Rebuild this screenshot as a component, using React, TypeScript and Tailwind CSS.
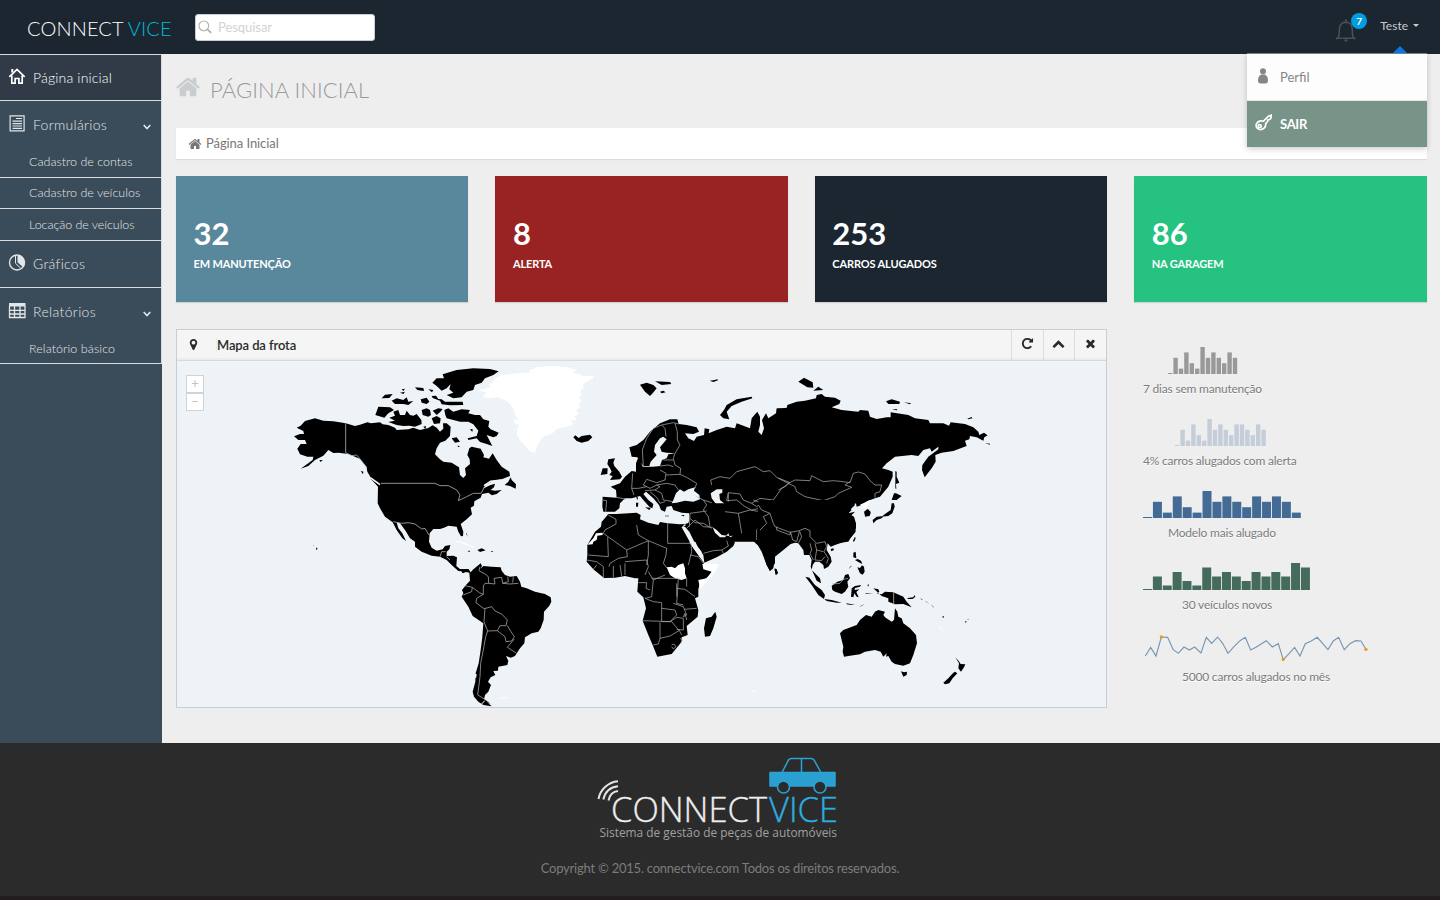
import React from "react";

const HOME =
  "M1472 992v480q0 26-19 45t-45 19h-384v-384h-256v384h-384q-26 0-45-19t-19-45v-480q0-1 .5-3t.5-3l575-474 575 474q1 2 1 6zm223-69l-62 74q-8 9-21 11h-3q-13 0-21-7l-692-577-692 577q-12 8-24 7-13-2-21-11l-62-74q-8-10-7-23.5t11-21.5l719-599q32-26 76-26t76 26l244 204v-195q0-14 9-23t23-9h192q14 0 23 9t9 23v408l219 182q10 8 11 21.5t-7 23.5z";
const MARKER =
  "M1152 640q0-106-75-181t-181-75-181 75-75 181 75 181 181 75 181-75 75-181zm256 0q0 109-33 179l-364 774q-16 33-47.5 52t-67.5 19-67.5-19-46.5-52l-365-774q-33-70-33-179 0-212 150-362t362-150 362 150 150 362z";
const REPEAT =
  "M1664 256v448q0 26-19 45t-45 19h-448q-42 0-59-40-17-39 14-69l138-138q-148-137-349-137-104 0-198.5 40.5t-163.5 109.5-109.5 163.5-40.5 198.5 40.5 198.5 109.5 163.5 163.5 109.5 198.5 40.5q119 0 225-52t179-147q7-10 23-12 15 0 25 9l137 138q9 8 9.5 20.5t-7.5 22.5q-109 132-264 204.5t-327 72.5q-156 0-298-61t-245-164-164-245-61-298 61-298 164-245 245-164 298-61q147 0 284.5 55.5t244.5 156.5l130-129q29-31 70-14 39 17 39 59z";
const CHEVRON =
  "M1683 1331l-166 165q-19 19-45 19t-45-19l-531-531-531 531q-19 19-45 19t-45-19l-166-165q-19-19-19-45.5t19-45.5l742-741q19-19 45-19t45 19l742 741q19 19 19 45.5t-19 45.5z";
const TIMES =
  "M1490 1322q0 40-28 68l-136 136q-28 28-68 28t-68-28l-294-294-294 294q-28 28-68 28t-68-28l-136-136q-28-28-28-68t28-68l294-294-294-294q-28-28-28-68t28-68l136-136q28-28 68-28t68 28l294 294 294-294q28-28 68-28t68 28l136 136q28 28 28 68t-28 68l-294 294 294 294q28 28 28 68z";

function Fa({ d, className }: { d: string; className: string }) {
  return (
    <svg viewBox="0 0 1792 1792" fill="currentColor" className={className}>
      <path d={d} />
    </svg>
  );
}

function Header() {
  return (
    <header className="relative flex h-[54px] shrink-0 items-start bg-[#1b2631]">
      <div className="ml-[27px] mt-[13px] w-[168px] whitespace-nowrap text-[20px] font-light leading-[30px] tracking-[0.15px] text-white">
        CONNECT <span className="-ml-[1px] text-[#00bdd6]">VICE</span>
      </div>
      <div className="mt-[14px] flex h-[27px] w-[180px] items-center rounded-[3px] border border-[#c8ccd4] bg-white pl-[2px]">
        <svg viewBox="0 0 16 16" className="-mt-[1px] h-[15px] w-[15px] shrink-0" fill="none" stroke="#b0b0b0" strokeWidth="1.2">
          <circle cx="6.2" cy="6.2" r="5.2" />
          <path d="M10.3 10.2 L14 13.800" strokeWidth="2" />
        </svg>
        <input placeholder="Pesquisar" className="ml-[5px] w-[140px] bg-transparent text-[13px] tracking-[-0.05px] text-gray-600 outline-none placeholder:text-[#d3d3d3]" />
      </div>
      <div className="relative ml-auto mt-[19px] h-[24px] w-[25px]">
        <svg viewBox="0 0 22 24" className="h-[24px] w-[22px]" fill="none" stroke="#4b5157" strokeWidth="1.5">
          <path d="M1.300 20q2.700-1.500 2.900-5C4.200 8 4.500 3.500 10.800 3.200 17.200 3.500 17.400 8 17.400 15q.2 3.500 2.900 5M1 19.300h6.500M14 19.300h6.500M8 19.300h6" />
          <path d="M9.800 1.500h2M9.500 21.500h2.800" strokeWidth="2.200" />
        </svg>
        <span className="absolute -top-[6px] left-[16px] flex h-4 w-4 items-center justify-center rounded-full bg-[#009edf] text-[10px] font-bold text-white">7</span>
      </div>
      <div className="ml-[20px] mr-[21px] mt-[18px] flex items-center text-[12px] leading-[16px] text-[#c8cbce]">
        Teste
        <span className="-mt-[1px] ml-[5px] h-0 w-0 border-x-[3px] border-t-[3px] border-x-transparent border-t-[#c8cbce]" />
      </div>
      <span className="absolute right-[33px] top-[46px] h-0 w-0 border-x-[7px] border-b-[7px] border-x-transparent border-b-[#0a77e8]" />
      <div className="absolute right-[13px] top-[53px] z-10 w-[180px] border-t border-[#6f8a80] bg-[#fdfdfd] text-[13px] shadow-[0_2px_6px_rgba(0,0,0,0.2)]">
        <a className="flex h-[47px] items-center border-b border-[#e6e6e6] text-[#868686]">
          <svg viewBox="0 0 12 16" className="-mt-[3px] ml-[10px] h-[16px] w-[12px]" fill="#868686">
            <circle cx="6" cy="3.200" r="3" />
            <path d="M3.800 6.500h4.400q2.800 2 2.800 5.500c0 3-1 3.500-5 3.500s-5-.5-5-3.500q0-3.500 2.800-5.500z" />
          </svg>
          <span className="ml-[11px] mt-[2px]">Perfil</span>
        </a>
        <a className="flex h-[46px] items-center bg-[#789388] font-bold text-white">
          <svg viewBox="0 0 18 17" className="-mt-[4px] ml-[8px] h-[17px] w-[18px]" fill="none" stroke="white" strokeWidth="1.700">
            <path d="M8.500 7.200 13.500 2.200 16.200 1.200 16 4 14.500 5.500 13 5.800 12.600 7.500 10.700 9.500C11.200 13.500 8 16 4.500 15.500 1.500 14.500.5 12 1.500 10 2.800 7 6 6.500 8.500 7.200z" />
            <circle cx="4.700" cy="12.200" r="1.500" />
          </svg>
          <span className="ml-[7px] mt-[1px] tracking-[-0.3px]">SAIR</span>
        </a>
      </div>
    </header>
  );
}

const icons: Record<string, React.ReactNode> = {
  home: (
    <g fill="none" stroke="currentColor" strokeWidth="1.700">
      <path d="M.8 8.800 8.500 1.500l7.700 7.300M3.300 7.500v7.600h3.300v-4.600h3.800v4.600h3.300V7.500" />
      <path d="M3.800 4.500V1" strokeWidth="2" />
    </g>
  ),
  form: (
    <g fill="none" stroke="currentColor" strokeWidth="1.200">
      <path d="M1.600 .8h14v15h-14z" />
      <path d="M7.500 3.500h6M4 6.200h9.500M4 8.600h9.500M4 11h9.500M4 13.400h9.500" />
    </g>
  ),
  pie: (
    <g>
      <circle cx="8.500" cy="8.500" r="7.500" fill="none" stroke="currentColor" strokeWidth="1.400" />
      <path d="M9 1a7.500 7.500 0 0 1 5.600 12.300L9 8.200z" fill="currentColor" />
      <path d="M7 1.500v7.800l5 4.700" stroke="currentColor" fill="none" />
    </g>
  ),
  table: (
    <g>
      <path d="M.5 1h16.500v3.500H.5z" fill="currentColor" />
      <path d="M1 4v11.500h15.500V4M1 8.300h15.500M1 12h15.500M6 4v11.500M11.500 4v11.500" stroke="currentColor" strokeWidth="1.300" fill="none" />
    </g>
  ),
};

function Item({ icon, label, arrow, className }: { icon: string; label: string; arrow?: boolean; className: string }) {
  return (
    <a className={"flex items-center pl-[8px] pr-[10px] text-[14px] " + className}>
      <svg viewBox="0 0 17 17" className="-mt-[2px] h-[17px] w-[18px]">{icons[icon]}</svg>
      <span className="ml-[7px]">{label}</span>
      {arrow && (
        <svg viewBox="0 0 8 6" className="ml-auto mt-[5px] h-[6px] w-[8px]" fill="none" stroke="currentColor" strokeWidth="1.600">
          <path d="M.7 1 4 4.500 7.300 1" />
        </svg>
      )}
    </a>
  );
}

function Sub({ label, className }: { label: string; className: string }) {
  return <a className={"flex items-center border-b border-[#d9dcdf] pl-[29px] text-[12.5px] " + className}>{label}</a>;
}

function Sidebar() {
  return (
    <aside className="w-[162px] shrink-0 bg-[#3a4b59] font-light text-[#e2e6e9]">
      <nav className="flex flex-col border-r border-t border-[#d9dcdf]">
        <Item icon="home" label="Página inicial" className="h-[46px] border-b border-[#d9dcdf] bg-[#303b47] tracking-[0.17px] text-white" />
        <Item icon="form" label="Formulários" arrow className="h-[48px] pb-[1px] tracking-[0.3px]" />
        <Sub label="Cadastro de contas" className="h-[29px] pb-[1px]" />
        <Sub label="Cadastro de veículos" className="h-[31px] pt-[1px]" />
        <Sub label="Locação de veículos" className="h-[32px] pt-[1px] tracking-[-0.06px]" />
        <Item icon="pie" label="Gráficos" className="h-[47px] border-b border-[#d9dcdf] pb-[1px] tracking-[0.3px]" />
        <Item icon="table" label="Relatórios" arrow className="h-[47px] pb-[1px] tracking-[0.35px]" />
        <Sub label="Relatório básico" className="h-[29px] tracking-[0.06px]" />
      </nav>
    </aside>
  );
}

function Card({ n, label, className }: { n: string; label: string; className: string }) {
  return (
    <div className={"h-[126px] flex-1 pl-[17.500px] pt-[37px] text-white shadow-[0_1px_1px_rgba(0,0,0,0.12)] " + className}>
      <div className="text-[31px] font-bold leading-[40px]">{n}</div>
      <div className="mt-[1px] text-[11px] font-bold leading-[20px] tracking-[-0.140px]">{label}</div>
    </div>
  );
}

function WorldMap() {
  return (
    <svg viewBox="177 361 929 346" className="h-[346px] w-full" stroke="none">
      <g transform="translate(470 360) scale(.33333)">
        <path
          fill="#fff"
          d="M22 90 40 88 62 80 55 72 68 68 75 55 95 46 125 42 160 38 180 40 178 30 200 22 245 18 290 22 322 30 305 38 330 42 335 48 372 47 370 55 350 65 338 72 342 82 332 92 335 105 325 112 334 122 325 132 332 142 318 150 328 162 312 168 320 180 300 182 312 192 290 200 260 208 245 222 225 228 212 240 202 255 195 280 178 272 160 252 148 238 140 222 142 208 148 195 135 192 130 180 145 178 135 165 132 150 118 130 105 120 80 112 50 115 38 108 50 98z"
        />
      </g>
      <path fill="#fff" d="M592 562 601 564 604 561z" />
      <g transform="translate(280 360) scale(.33333)">
        <path d="M42 229 60 222 72 222 70 213 50 203 62 197 75 183 105 175 130 182 160 184 197 190 225 198 240 194 262 187 273 190 300 187 308 193 325 195 345 203 350 210 385 208 400 203 420 210 445 204 458 196 470 203 480 215 490 206 489 190 500 190 512 200 510 228 496 242 480 248 470 265 465 283 480 298 490 305 515 308 537 322 540 345 550 354 558 345 555 325 570 312 569 298 562 285 568 265 575 260 602 266 612 285 610 292 627 296 638 280 650 300 665 320 688 335 690 348 665 358 640 362 618 374 608 386 630 376 645 371 642 382 632 390 645 392 665 390 650 402 636 406 625 398 606 402 602 413 583 424 582 437 572 443 576 463 560 478 542 492 550 515 549 528 543 529 535 515 530 500 505 497 492 503 480 507 460 507 449 520 447 545 455 563 470 572 488 568 495 558 511 555 508 568 500 575 500 588 520 587 531 592 529 618 540 627 565 627 571 636 550 634 535 633 515 615 500 600 480 590 455 587 425 575 405 560 405 545 390 535 375 510 360 490 350 487 355 505 367 520 378 543 367 535 350 510 338 487 315 470 300 445 293 430 294 380 278 362 262 335 260 322 240 297 225 290 205 282 175 278 160 279 145 270 130 287 105 300 85 318 62 326 98 300 100 290 82 290 60 283 52 266 62 252 80 252 75 240 55 240z" />
        <path d="M457 68 470 55 492 55 488 43 530 30 580 25 630 27 656 34 640 45 615 55 605 68 585 75 580 90 560 95 545 112 520 115 500 105 520 98 508 88 512 72 500 85 485 92 470 78z" />
        <path d="M305 115 315 104 338 102 328 114zM335 122 350 115 370 120 380 112 385 125 400 123 385 135 370 132 345 132zM360 98 375 95 370 102zM365 88 375 86 370 93zM405 82 430 84 432 93 412 90zM422 118 440 113 448 125 440 132 425 128zM445 88 460 90 456 97zM455 108 468 107 475 117 485 118 495 125 525 125 548 125 550 135 510 136 485 133 480 122 458 114zM286 165 295 140 330 142 342 150 325 160 313 173zM340 155 355 150 360 165 375 165 380 152 390 165 400 167 410 162 424 180 425 192 405 200 388 197 370 198 350 195 325 186 345 182 328 173 345 167zM425 150 440 145 450 150 453 165 445 170 428 165zM430 200 438 198 436 208zM458 152 475 145 488 147 480 157 470 165zM455 175 470 168 482 175 480 190 462 192zM493 150 505 145 520 155 545 148 570 150 565 160 585 165 600 165 610 178 628 183 625 200 632 208 656 218 650 228 640 232 620 225 637 258 620 252 600 246 590 235 565 240 563 235 590 228 595 212 580 193 565 185 540 185 520 180 500 175 496 165zM515 235 530 232 540 245 525 248zM570 208 578 207 577 216zM532 257 540 258 536 262zM242 332 250 335 249 343zM271 357 280 357 302 375 303 380 285 368zM118 300 128 300 122 306zM674 375 685 365 692 352 695 360 708 373 707 386 690 378zM592 570 605 565 617 571 600 576zM562 573 570 572 569 576zM632 573 640 573 636 576zM558 520 563 530 560 520M100 556l3 2-2 0zM108 562l5 4-4 4z" />
        <path fill="none" stroke="#fff" strokeWidth="4" d="M525 545 545 547 582 562" />
        <path fill="none" stroke="#eef3f7" strokeWidth="5" d="M272 354 300 374M612 377 632 364 665 360" />
        <g fill="none" stroke="#bbb" strokeWidth="2.300">
          <path d="M197 190V278L215 287 230 285 245 303 260 322M303 370H465L480 377H505L530 390 540 405 535 422 560 410 580 400 603 400 612 384M340 485 365 490 385 488 405 492 425 507 435 505 447 525M480 590 485 575 497 575M500 590 510 600" />
        </g>
      </g>
      <g transform="translate(420 540) scale(.33333)">
        <path d="M120 88 135 92 145 88 152 97 160 88 172 78 182 70 186 78 182 86 190 78 215 80 242 82 245 92 255 105 270 110 290 108 300 125 304 140 320 145 345 155 375 162 392 172 394 185 388 197 372 215 371 240 362 265 355 275 335 280 315 292 313 310 300 325 285 348 272 353 258 348 265 362 262 375 235 380 234 392 220 393 226 405 212 412 204 425 213 435 205 455 195 465 192 478 215 499 190 495 175 485 162 470 158 455 166 425 167 400 176 370 182 330 187 290 190 250 158 228 145 200 125 170 130 160 126 150 138 135 150 122 148 98 138 96 128 100z" />
        <path d="M200 487 190 475 212 492z" />
        <path fill="#eef3f7" d="M165 402 170 402 169 412 164 415z" />
        <path fill="none" stroke="#fff" strokeWidth="3" d="M240 474 262 473M185 492l9-10" />
        <g fill="none" stroke="#aaa" strokeWidth="2.300">
          <path d="M180 80 177 92 195 102 205 110 206 130 195 130 190 138V163L178 158 157 142 135 137M157 142 155 155 130 165M190 163 170 175 168 188 190 205 197 205 215 200 225 213 245 222 262 240 258 257 240 257 232 272 203 273 192 245 195 205M203 273 197 290 190 330 182 370 180 410 175 450 173 465 195 478M232 272 255 290 258 305 275 303 283 290 273 275 262 257M283 297 262 322 290 340M206 130 225 132 222 115 245 112 248 130 265 125 263 110M248 130 270 132 295 130M280 110 278 128" />
        </g>
      </g>
      <g transform="translate(560 360) scale(.33333)">
        <path d="M40 232 46 226 56 234 65 228 90 224 97 232 85 243 65 248 50 243zM240 74 260 68 280 75 290 85 278 100 270 108 255 95zM285 64 330 66 334 72 305 75zM300 95 310 92 317 97 305 100zM449 62 460 61 473 58 474 61 460 66zM480 165 492 150 500 135 530 118 575 110 577 115 545 125 515 138 500 155 508 178 490 175z" />
        <path d="M208 262 230 255 250 240 270 215 300 190 330 178 352 178 356 192 380 195 410 202 417 215 400 222 375 220 385 235 402 243 410 230 432 225 434 205 448 208 446 220 470 210 500 200 525 205 530 190 570 205 575 175 592 155 600 170 600 195 595 215 605 225 612 205 606 180 618 160 625 175 648 160 650 148 690 142 690 545 385 545 365 505 385 490 390 470 388 460 365 458 340 450 335 438 320 440 315 455 303 450 297 435 280 415 258 395 250 402 265 420 280 432 277 445 268 440 250 420 240 408 215 415 195 415 180 430 178 445 165 455 130 455 127 440 128 410 170 413 168 390 152 380 180 370 195 350 215 333 228 335 228 310 235 292 242 305 248 320 280 320 300 318 306 300 320 295 325 283 345 280 320 278 305 275 300 262 310 250 320 238 310 230 300 235 285 255 282 275 290 285 272 305 268 318 250 318 232 292 215 290z" />
        <path d="M145 298 165 295 160 308 163 318 178 335 186 350 180 358 150 360 158 348 148 345 155 335 150 325 142 312zM122 345 128 325 143 325 142 342zM255 442 273 443 268 450zM228 428 235 428 234 440 228 440zM228 412 234 412 233 420zM315 467H327V469H315zM362 467 373 464 372 469z" />
        <path fill="#eef3f7" d="M340 420 348 400 360 388 372 395 385 388 405 382 402 392 418 405 420 418 400 425 375 422 350 428 335 430zM452 400 470 388 487 388 487 398 478 402 480 420 492 430 494 450 478 455 465 448 468 432 455 415z" />
      </g>
      <g transform="translate(780 360) scale(.33333)">
        <path d="M-10 145 20 145 22 135 50 125 75 122 108 115 110 105 125 102 135 110 165 113 182 122 178 132 155 142 185 150 235 155 240 150 265 152 270 170 290 177 320 172 332 172 332 157 385 165 405 175 445 180 450 190 490 190 507 197 512 187 555 192 580 202 595 215 598 225 612 218 623 226 613 232 610 242 590 232 570 228 568 238 555 242 560 258 520 273 485 278 466 285 467 305 455 325 434 352 426 330 427 315 445 290 475 268 475 260 455 275 450 265 430 270 415 288 395 285 345 290 320 310 306 325 325 330 338 335 338 350 325 380 300 410 285 415 265 422 245 435 230 440 228 430 205 442 215 450 205 460 222 470 228 490 228 505 215 528 205 545 -10 545z" />
        <path d="M55 65 72 53 98 67 100 83 82 82zM100 92 115 80 130 90zM318 124 335 118 360 125 358 132 325 132zM372 127 393 130 390 133zM336 149 350 147 352 151zM562 176 575 171 577 175 565 178zM615 249 630 251 630 254zM346 333 350 335 350 350 358 368 348 372 349 388 346 385zM342 400 348 400 365 408 350 420 335 420zM335 430 342 430 344 440 337 460 325 468 305 470 315 462 332 450zM278 480 290 470 312 468 305 475 290 480 280 490zM258 450 265 448 272 460 268 468 255 470z" />
        <path fill="#fff" d="M240 434 270 420 272 425 255 448 250 445z" />
      </g>
      <g transform="translate(570 500) scale(.33333)">
        <path d="M100 60 115 42 140 42 200 38 212 45 210 58 235 68 265 75 270 66 293 70 330 73 345 72 335 82 360 130 385 165 400 185 402 196 420 196 438 192 420 225 390 250 385 268 385 290 375 295 385 330 383 350 350 378 353 405 335 412 335 425 305 462 262 470 250 440 235 405 218 362 228 325 220 292 202 275 205 235 195 235 165 228 135 233 102 234 70 208 50 185 52 165 52 135 75 95 93 80 95 65z" />
        <path d="M345 72 358 68 358 40 360 10 660 10 660 125 640 143 615 168 615 190 600 213 590 195 573 140 560 133 540 113 490 107 470 90 440 60 420 65 425 75 440 100 450 115 465 112 475 100 480 115 495 127 490 138 470 155 440 172 403 188 400 165 385 145 360 90z" />
        <path fill="#eef3f7" d="M335 82 345 80 358 95 375 130 395 155 400 185 385 165 370 145zM428 82 440 90 455 105 480 108 490 107 480 112 475 100 465 112 450 112 435 98z" />
        <path fill="#fff" d="M397 192 445 192 442 205 425 230 390 268 385 240 410 235 425 215 400 208zM290 202 305 200 315 205 325 195 340 190 345 205 345 220 350 235 335 240 315 235 300 225zM52 134 70 115 78 100 98 98 98 105 82 107 80 120 70 125 68 133zM548 570 560 574 550 577z" />
        <path d="M436 335 440 350 430 385 420 408 405 410 402 385 408 355 425 350zM614 205 620 208 623 220 617 225z" />
        <g fill="none" stroke="#aaa" strokeWidth="2.200">
          <path d="M293 70V130H363M235 122 290 145 288 165 280 190 292 205M170 150 235 122 235 165 230 195M100 100 170 150 172 170 145 175 120 190 117 200M113 112 115 170 55 165M200 75 205 105 235 122M363 130 365 155 355 195M50 180 80 185 100 200 100 235M80 195 70 208M130 198V232M150 195 155 228M165 185 230 180 235 200 225 225M165 190V225M235 215 250 240 285 225M250 240 245 290 225 295 250 305 275 308 275 365M205 248H230L228 265 240 270M245 235H325L322 285 320 310 340 315M275 325 315 330 320 345 300 365 275 365M218 362 305 365 330 395 335 405M270 367V415L265 432 250 435M270 415 300 408 330 390M320 265 345 268 375 290M350 235 350 260M320 250V290M343 328 380 325M310 310 340 320 350 345 340 350 345 340 350 360M300 365 320 352 340 355 340 390 320 388M305 435 312 432 318 440 310 447 305 440M330 415 337 420 333 427M360 165 385 170 400 190M400 160 430 152 455 150 460 160M455 150 475 138 470 122M350 85 375 60 400 80 428 82" />
        </g>
      </g>
      <g transform="translate(560 360) scale(.33333)" fill="none" stroke="#aaa" strokeWidth="2.200">
        <path d="M250 318 247 270 260 235 280 205 305 195 340 188 356 192M305 195 315 205 318 230M345 190 352 215 352 240 360 255 345 280 340 295 345 315 362 325 360 343 380 352 410 370 405 385M300 318 325 315 340 320M310 300 340 300M300 330 318 340 315 360 290 368 260 358 250 375 270 385 290 375 320 370 345 375 355 390M318 345 360 343M218 340 215 385 235 385 260 380M215 385 222 405M255 392 285 390 305 400 310 420 340 425M285 390 300 380 290 375M270 395 290 412 300 430 315 425M128 420 140 422 137 455M170 412 198 418M455 375 452 360 480 350 510 355 530 335 585 320 610 335 630 332 650 352 690 368 665 385 640 420 600 415 575 430 550 420 540 402 505 398 505 425M505 398 500 422 530 420 555 440 575 450 600 445 615 460 635 470 635 490 660 505 690 515M495 455 535 460 540 490 545 520M535 460 570 450 600 455 610 480 590 510 590 540M410 410 430 420 455 428M430 420 440 435 430 450 445 470 450 500M390 460 440 453M390 475 405 488 430 490 455 505M390 460 388 500M575 430 590 440 605 430 580 420M640 505 690 525M145 465 168 478 168 492 135 510 130 520" />
      </g>
      <g transform="translate(780 360) scale(.33333)" fill="none" stroke="#aaa" strokeWidth="2.200">
        <path d="M-5 355 25 370 45 360 90 362 95 347 110 355 130 365 160 362 190 365 210 368 220 340 235 336 255 342 270 362 285 375 305 375 300 395 285 400 285 413M25 370 45 380 50 395 75 410 130 422 165 410 175 400 215 382 195 375 210 365M-5 390 15 380 25 370" />
      </g>
      <g transform="translate(760 500) scale(.33333)">
        <path d="M-5 0H275L285 15 272 28 265 40 285 35 272 48 285 70 287 95 275 110 260 125 240 130 225 135 212 140 203 130 200 150 212 170 215 185 205 200 192 207 190 195 178 185 165 185 158 195 155 210 165 220 180 235 183 250 170 242 158 215 152 200 155 180 148 165 132 165 130 150 115 130 105 128 92 132 70 150 45 170 42 190 40 205 30 213 20 195 5 155 -10 130z" />
        <path d="M43 208 50 208 54 220 48 225zM212 147 220 145 222 150 214 154zM279 122 285 110 287 115 282 126zM280 158 287 155 289 175 280 172zM292 202 300 204 306 196 312 200 314 215 308 224 300 220zM285 180 293 177 303 182 307 192 299 188zM265 208 275 198 273 197zM215 258 232 245 250 240 255 225 265 222 270 235 262 245 265 260 255 275 245 282 225 275 217 270zM136 230 148 233 165 255 185 270 195 285 192 297 175 285 155 255zM193 297 215 300 245 308 230 308 200 303zM275 265 285 258 303 255 300 260 285 264 284 270 298 268 289 276 296 292 290 290 283 280 280 292 273 290 274 280zM260 310 285 315 275 315 260 313zM298 320 315 311 305 318zM316 280 340 281 318 282zM322 255 327 253 325 260zM340 265 355 268 358 275 350 280 365 283 375 275 400 277 430 290 440 305 455 322 430 312 405 313 385 305 385 295 365 288zM443 294 460 292 463 285 466 290 458 297 443 297zM312 35 322 28 332 35 328 48 315 48z" />
        <path d="M355 330 375 335 370 345 375 352 395 365 402 360 405 325 412 335 415 350 425 355 430 370 450 385 468 405 471 430 460 465 450 490 430 497 405 492 395 485 385 468 378 470 380 460 370 470 362 455 345 450 315 455 300 463 270 467 252 470 248 455 250 440 240 400 250 390 290 375 300 360 318 345 335 350 345 335zM423 514 432 517 441 515 440 525 430 530zM586 472 596 483 602 492 616 493 612 502 603 515 595 505 597 490zM550 548 565 535 580 518 585 515 592 520 578 535 568 550 555 553zM548 348h3v5h-3zM614 365 620 363 618 368zM622 358l5-2-3 3zM480 293l8 6-2 1zM495 302 510 312 498 305zM512 313l10 9-2 0z" />
        <path stroke="#fff" strokeWidth="3" fill="none" d="M537 382 550 392M318 20 328 3" />
        <g fill="none" stroke="#aaa" strokeWidth="2.200">
          <path d="M-5 15 5 30 30 40 40 70 45 80 90 97 118 92 135 85 150 92 150 110 170 130 195 125 200 140 192 155 205 175 200 190M50 80 50 90 90 105 92 95M92 97 98 120 110 125 118 95M118 92 125 110 115 130M150 130 155 150 150 160 160 180M165 130 170 150 190 155M170 150 165 180 185 182 195 170M217 252 240 250 250 238 265 235M0 90 20 70 10 50 30 40" />
          <path d="M401 277V313" stroke="#ccc" />
        </g>
      </g>
    </svg>
  );
}

function MapPanel() {
  return (
    <section className="w-[931px] border border-[#c9ccd0] bg-[#edf3f7]">
      <div className="flex h-[31px] border-b border-[#d7d9da] bg-[#f5f5f5] text-[#2a2a2a] shadow-[inset_0_-2px_0_#ececec]">
        <div className="flex flex-1 items-center pl-[10px] text-[13px] font-medium">
          <Fa d={MARKER} className="-mt-[1px] h-[13px] w-[13px]" />
          <span className="ml-[16px] border-l border-[#eaeaea] pb-[1px] font-semibold leading-[14px] tracking-[-0.100px]">Mapa da frota</span>
        </div>
        {[REPEAT, CHEVRON, TIMES].map((d, i) => (
          <button key={i} className="flex w-[31.700px] items-center justify-center border-l border-[#dcdcdc] pb-[3px]">
            <Fa d={d} className="h-[13px] w-[13px]" />
          </button>
        ))}
      </div>
      <div className="relative">
        <WorldMap />
        <div className="absolute left-[9px] top-[14px] flex flex-col text-[#c4c4c4]">
          <span className="flex h-[18px] w-[18px] items-center justify-center border border-[#d2d2d2] bg-white pb-[1px] text-[13px] leading-none">+</span>
          <span className="flex h-[18px] w-[18px] items-center justify-center border border-[#d2d2d2] bg-white pb-[1px] text-[13px] leading-none">−</span>
        </div>
      </div>
    </section>
  );
}

function Bars({ data, unit, pitch, w, color }: { data: number[]; unit: number; pitch: number; w: number; color: string }) {
  return (
    <svg width={data.length * pitch + 2} height="28" fill={color}>
      {data.map((v, i) => (
        <rect key={i} x={i * pitch} y={28 - Math.max(1, v * unit)} width={w} height={Math.max(1, v * unit)} />
      ))}
    </svg>
  );
}

function Stat({ children, label, chart, text }: { children: React.ReactNode; label: string; chart: string; text: string }) {
  return (
    <div className="h-[72px]">
      <div className={"h-[28px] " + chart}>{children}</div>
      <div className={"mt-[6px] whitespace-nowrap text-[12px] leading-[18px] tracking-[-0.210px] text-[#7c7c7c] [text-shadow:0_1px_0_#fff] " + text}>{label}</div>
    </div>
  );
}

function Stats() {
  return (
    <div className="ml-[36px] mt-[17px]">
      <Stat label="7 dias sem manutenção" chart="pl-[25px]" text="">
        <Bars data={[0, 3, 1, 4, 2, 1, 5, 3, 4, 3, 2, 4, 3]} unit={5.4} pitch={5.4} w={4.4} color="#999999" />
      </Stat>
      <Stat label="4% carros alugados com alerta" chart="pl-[32px]" text="">
        <Bars data={[0, 3, 1, 4, 2, 1, 5, 3, 4, 3, 2, 4, 4, 3, 2, 4, 3]} unit={5.4} pitch={5.4} w={4.4} color="#c5cdd8" />
      </Stat>
      <Stat label="Modelo mais alugado" chart="" text="pl-[25px]">
        <Bars data={[0, 3, 1, 4, 2, 1, 5, 3, 4, 3, 2, 4, 3, 4, 3, 1]} unit={5.4} pitch={9.92} w={9} color="#446b95" />
      </Stat>
      <Stat label="30 veículos novos" chart="" text="pl-[39px]">
        <Bars data={[0, 3, 1, 4, 2, 1, 5, 3, 4, 3, 2, 4, 3, 4, 3, 6, 5]} unit={4.5} pitch={9.87} w={9} color="#456b5c" />
      </Stat>
      <Stat label="5000 carros alugados no mês" chart="" text="pl-[39px]">
        <svg viewBox="429 942 680 84" width="226.600" height="28">
          <path d="M436 1008 452 982 468 1008 484 951 503 952 519 988 535 1000 552 981 568 990 584 981 603 999 619 952 635 970 653 951 668 970 684 1000 702 980 720 962 736 952 752 990 768 982 799 962 817 981 835 971 850 1019 868 1000 884 982 900 1008 916 971 934 963 952 952 984 989 1000 963 1016 952 1033 989 1050 971 1067 962 1083 963 1098 988" fill="none" stroke="#7896b3" strokeWidth="3.400" />
          <g fill="#f7941d">
            <circle cx="484" cy="951" r="5" />
            <circle cx="850" cy="1018" r="5" />
            <circle cx="1098" cy="988" r="5" />
          </g>
        </svg>
      </Stat>
    </div>
  );
}

function Footer() {
  return (
    <footer className="flex h-[157px] shrink-0 flex-col items-center border-b-4 border-[#231c20] bg-[#2b2b2b] pt-[12px]">
      <svg viewBox="595 755 251 88" className="h-[88px] w-[251px] overflow-visible">
        <g fill="none" stroke="#e4e4e4" strokeWidth="2">
          <path d="M598.500 799C600 790 608 782 618 781.200M603.300 799.500C605 792 610 787 618 786.200M608.500 800.500C609.500 795.500 613 791.500 618 791" />
        </g>
        <g stroke="#2aa4d5" strokeWidth="1.500" fill="none">
          <path d="M782 772.500 788.500 760Q789.500 758.500 791.500 758.500H811Q813 758.500 814 760L821 772.500M801.500 759V772" />
          <path fill="#2a9fd0" d="M770 772.500H835V786H770z" strokeLinejoin="round" />
          <circle cx="783.500" cy="787" r="6" fill="#2b2b2b" />
          <circle cx="820" cy="787" r="6" fill="#2b2b2b" />
        </g>
        <text x="611" y="821.500" textLength="156" lengthAdjust="spacingAndGlyphs" fontFamily="Open Sans" fontWeight="300" fontSize="34" fill="#ededed" stroke="#ededed" strokeWidth=".35">CONNECT</text>
        <text x="769" y="821.500" textLength="69" lengthAdjust="spacingAndGlyphs" fontFamily="Open Sans" fontWeight="300" fontSize="34" fill="#2aaee0" stroke="#2aaee0" strokeWidth=".35">VICE</text>
        <text x="599.500" y="836.500" textLength="237.500" lengthAdjust="spacingAndGlyphs" fontFamily="Open Sans" fontSize="12.500" fill="#a0a0a0">Sistema de gestão de peças de automóveis</text>
      </svg>
      <p className="mt-[15px] text-[13px] leading-[20px] tracking-[-0.230px] text-[#7c7c7c]">Copyright © 2015. connectvice.com Todos os direitos reservados.</p>
    </footer>
  );
}

export default function App() {
  return (
    <div className="flex h-[900px] w-[1440px] flex-col overflow-hidden bg-[#eeeeee] font-['Lato',sans-serif]">
      <Header />
      <div className="flex min-h-0 flex-1">
        <Sidebar />
        <main className="flex-1 pl-[14px] pr-[13px]">
          <h1 className="mt-[19px] flex h-[32px] items-center text-[22px] font-light text-[#999]">
            <Fa d={HOME} className="-ml-[1px] -mt-[4px] h-[26px] w-[26px] text-[#c9cdd0]" />
            <span className="ml-[9px] tracking-[0.08px]">PÁGINA INICIAL</span>
          </h1>
          <div className="mt-[23px] flex h-[31px] items-center bg-white pl-[12px] text-[13px] text-[#777] shadow-[0_1px_1px_rgba(0,0,0,0.08)]">
            <Fa d={HOME} className="h-[14px] w-[14px]" />
            <span className="ml-[4px] mt-[1px] tracking-[-0.080px]">Página Inicial</span>
          </div>
          <div className="mt-[17px] flex gap-[27.100px] pr-[0.400px]">
            <Card n="32" label="EM MANUTENÇÃO" className="bg-[#59889c]" />
            <Card n="8" label="ALERTA" className="bg-[#992222]" />
            <Card n="253" label="CARROS ALUGADOS" className="bg-[#1b2631]" />
            <Card n="86" label="NA GARAGEM" className="bg-[#26c281]" />
          </div>
          <div className="mt-[27px] flex items-start">
            <MapPanel />
            <Stats />
          </div>
        </main>
      </div>
      <Footer />
    </div>
  );
}
